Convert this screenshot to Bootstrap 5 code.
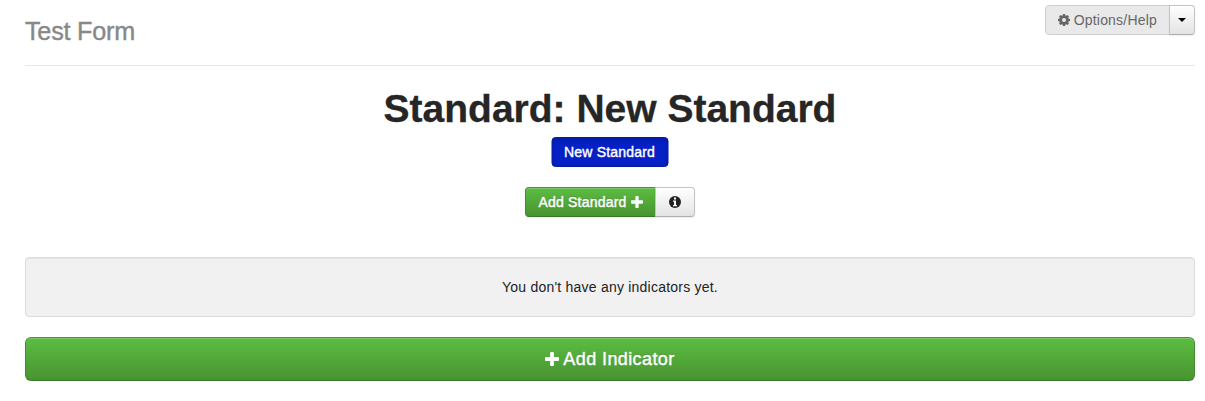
<!DOCTYPE html>
<html lang="en">
<head>
<meta charset="utf-8">
<meta name="viewport" content="width=device-width, initial-scale=1">
<title>Test Form</title>
<link href="https://cdn.jsdelivr.net/npm/bootstrap@5.3.0/dist/css/bootstrap.min.css" rel="stylesheet">
<style>
body{font:14px/20px "Liberation Sans",Arial,sans-serif;letter-spacing:.22px;color:#222;background:#fff}
.page{padding:5px 10px 0 25px}
.page-top{height:61px;border-bottom:1px solid #e8e8e8}
.form-name{font-size:25.2px;line-height:40px;letter-spacing:-.22px;color:#888;-webkit-text-stroke:.4px #888;margin:6px 0 0;font-weight:400}
.heading{font-size:39px;line-height:40px;letter-spacing:0;font-weight:700;color:#262626;-webkit-text-stroke:.3px #262626;margin:23px 0 8px}
.btn{--bs-btn-font-size:14px;--bs-btn-line-height:20px;--bs-btn-padding-y:4px;--bs-btn-padding-x:12px;--bs-btn-border-radius:4px;height:30px;white-space:nowrap;letter-spacing:.2px}
.btn-plain{color:#222;border-color:#c4c4c4 #c4c4c4 #aeaeae;background:linear-gradient(#fff,#e3e3e3);box-shadow:inset 0 1px 0 rgba(255,255,255,.2),0 1px 2px rgba(0,0,0,.08)}
.btn-plain:disabled{background:#e9e9e9;color:#666;border-color:#cfcfcf;opacity:1;box-shadow:none}
.btn-blue,.btn-blue:hover{color:#fff;background:#0520c4;border-color:#041ba5;box-shadow:inset 0 2px 4px rgba(0,0,0,.15)}
.btn-green,.btn-green:hover{color:#fff;background:linear-gradient(#5bbd41,#499431);border-color:#469531 #43892f #397a28;text-shadow:0 -1px 0 rgba(0,0,0,.25);box-shadow:inset 0 1px 0 rgba(255,255,255,.2),0 1px 2px rgba(0,0,0,.05)}
.btn-blue,.btn-green{-webkit-text-stroke:.4px #fff}
.btn-blue{width:117px;padding-left:0;padding-right:0;transform:translateX(-.5px)}
.btn svg{fill:currentColor;stroke:none;flex:none}
.add-btn{width:131px;padding-left:0;padding-right:0}
.add-group{margin-top:20px}
.btn-wide{height:44px;font-size:18px;letter-spacing:.4px;border-radius:6px}
.btn-wide svg{margin-bottom:1px}
.caret-btn{width:26px;padding:0}
.info-btn{width:40px;padding:0}
.notice{height:60px;background:#f1f1f1;border:1px solid #dcdcdc;border-radius:4px;box-shadow:inset 0 1px 1px rgba(0,0,0,.05);margin:40px 0 20px}
</style>
</head>
<body>
<svg class="d-none"><symbol id="plus" viewBox="0 0 11 11"><path d="M4 .7Q4 0 4.700 0h1.600Q7 0 7 .7V4h3.300Q11 4 11 4.700v1.600Q11 7 10.300 7H7v3.300Q7 11 6.300 11H4.700Q4 11 4 10.300V7H.7Q0 7 0 6.300V4.700Q0 4 .7 4H4z"/></symbol></svg>
<main class="page">
  <header class="page-top d-flex justify-content-between align-items-start">
    <h3 class="form-name">Test Form</h3>
    <div class="btn-group">
      <button class="btn btn-plain d-flex align-items-center" disabled><svg width="12" height="12" viewBox="0 0 12 12" class="me-1"><path fill-rule="evenodd" d="M4.900 0h2.200l.3 1.500.8.3L9.500 1 11 2.500l-.8 1.300.3.8L12 4.900v2.200l-1.500.3-.3.800.8 1.300L9.500 11l-1.300-.8-.8.3L7.100 12H4.900l-.3-1.500-.8-.3-1.300.8L1 9.500l.8-1.300-.3-.8L0 7.100V4.900l1.500-.3.3-.8L1 2.500 2.500 1l1.300.8.8-.3zM6 4a2 2 0 1 0 0 4 2 2 0 0 0 0-4z"/></svg><span>Options/Help</span></button>
      <button class="btn btn-plain caret-btn d-flex align-items-center justify-content-center" aria-label="More options"><svg width="8" height="4" viewBox="0 0 8 4"><path fill="#000" d="M0 0h8L4 4z"/></svg></button>
    </div>
  </header>
  <section class="text-center">
    <h1 class="heading">Standard: New Standard</h1>
    <button class="btn btn-blue d-block mx-auto">New Standard</button>
    <div class="btn-group add-group d-flex justify-content-center">
      <button class="btn btn-green add-btn d-flex align-items-center justify-content-center flex-grow-0"><span>Add Standard</span><svg class="ms-1" width="12" height="12"><use href="#plus"/></svg></button>
      <button class="btn btn-plain info-btn d-flex align-items-center justify-content-center flex-grow-0" aria-label="Information"><svg width="12" height="12" viewBox="0 0 12 12"><circle cx="6" cy="6" r="6"/><path fill="#fff" d="M5 1.500h2v2H5zM4 4.500h3V9h1v1.200H4V9h1V5.700H4z"/></svg></button>
    </div>
    <div class="notice d-flex align-items-center justify-content-center"><span>You don't have any indicators yet.</span></div>
    <button class="btn btn-green btn-wide w-100 d-flex align-items-center justify-content-center"><svg class="me-1" width="14" height="14"><use href="#plus"/></svg><span>Add Indicator</span></button>
  </section>
</main>
<script src="https://cdn.jsdelivr.net/npm/bootstrap@5.3.0/dist/js/bootstrap.bundle.min.js"></script>
</body>
</html>
